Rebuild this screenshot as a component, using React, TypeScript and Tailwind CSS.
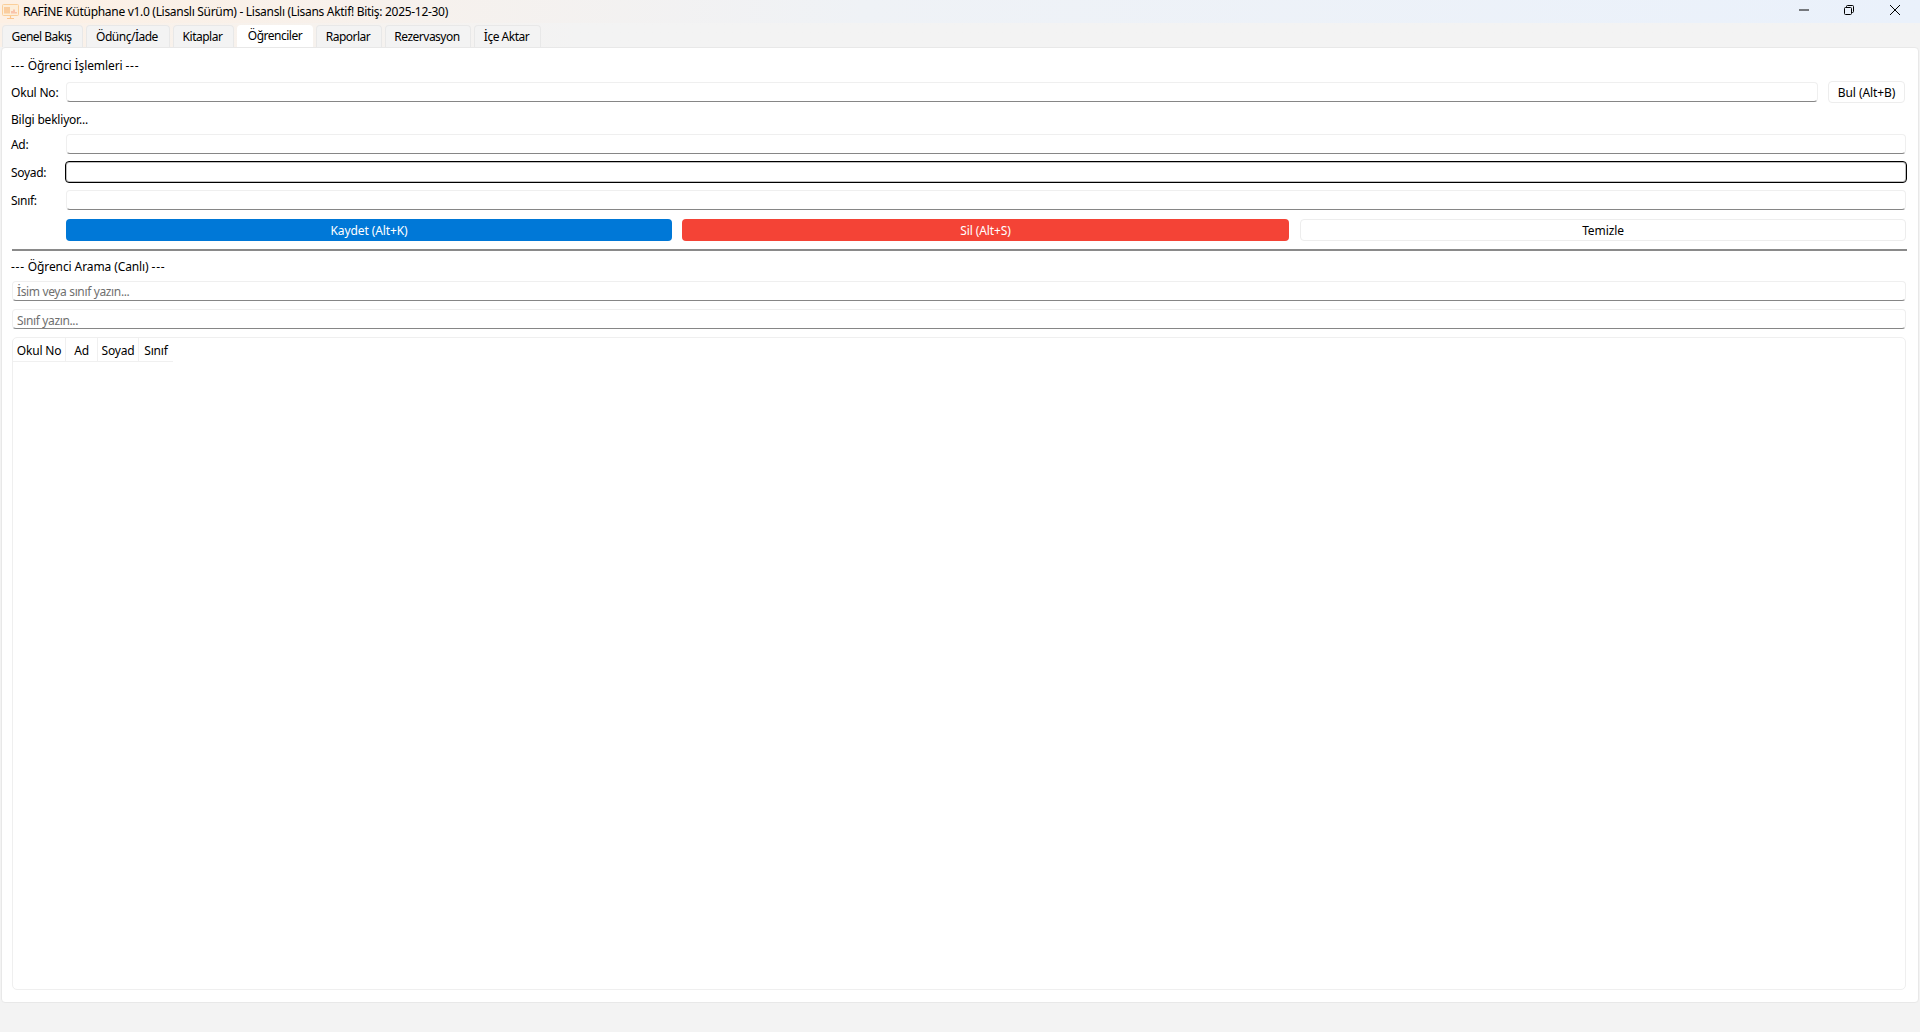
const font = "font-['Noto_Sans','Liberation_Sans',sans-serif]";

const tabs = [
  { label: 'Genel Bakış', width: 'w-[81px]' },
  { label: 'Ödünç/İade', width: 'w-[84px]' },
  { label: 'Kitaplar', width: 'w-[61px]' },
  { label: 'Öğrenciler', width: 'w-[76px]', active: true },
  { label: 'Raporlar', width: 'w-[66px]' },
  { label: 'Rezervasyon', width: 'w-[86px]' },
  { label: 'İçe Aktar', width: 'w-[67px]' },
];

const columns = [
  { label: 'Okul No', width: 'w-[53px]', border: 'border-r' },
  { label: 'Ad', width: 'w-[32px]', border: 'border-r' },
  { label: 'Soyad', width: 'w-[41px]', border: 'border-r' },
  { label: 'Sınıf', width: 'w-[34px]', border: '' },
];

const inputClass =
  'block h-5 rounded-[4px] border border-[#efefef] border-b-[#868686] bg-white px-1 text-xs tracking-[-0.36px] outline-none placeholder:text-[#6f6f6f]';

function AppIcon() {
  return (
    <svg width="17" height="17" viewBox="0 0 17 17" fill="none" className="ml-[2px] shrink-0">
      <rect x="0.500" y="1.500" width="16" height="11" rx="1" fill="#fdeeda" stroke="#fbcf9a" />
      <path d="M3 4v6.500M5 4v6.500M7 4v6.500" stroke="#f9b877" strokeWidth="1.200" />
      <path d="M10 8v2.500M12 6.500v4M14 9v1.500" stroke="#f7a78c" strokeWidth="1.200" />
      <path d="M8.500 13v2M5 15.500h7" stroke="#fbc58d" strokeWidth="1.200" />
    </svg>
  );
}

function WindowControls() {
  return (
    <div className="ml-auto mb-[3px] flex items-center text-black">
      <svg width="12" height="12" viewBox="0 0 12 12" className="mr-[33px]">
        <path d="M1 6h10" stroke="currentColor" strokeWidth="1" />
      </svg>
      <svg width="12" height="12" viewBox="0 0 12 12" fill="none" className="mr-[34px]">
        <rect x="1.500" y="3.500" width="7" height="7" rx="1" stroke="currentColor" />
        <path d="M3.500 3.500v-1a1 1 0 0 1 1-1h5a1 1 0 0 1 1 1v5a1 1 0 0 1-1 1h-1" stroke="currentColor" />
      </svg>
      <svg width="12" height="12" viewBox="0 0 12 12" className="mr-[19px]">
        <path d="M1 1l10 10M11 1L1 11" stroke="currentColor" strokeWidth="1" />
      </svg>
    </div>
  );
}

function SectionLabel({ text }: { text: string }) {
  return (
    <div className="flex h-[18px] items-center pl-[9px]">
      <span className="tracking-[0.7px]">---</span>
      <span>&nbsp;{text}&nbsp;</span>
      <span className="tracking-[0.7px]">---</span>
    </div>
  );
}

function FieldRow({ label, focused }: { label: string; focused?: boolean }) {
  return (
    <div className="flex items-center pl-[9px] pr-[12px]">
      <span className="w-[55px] shrink-0 pt-[2px] text-xs tracking-[-0.3px]">{label}</span>
      {focused ? (
        <input className="block h-[22px] flex-1 -ml-px -mr-px rounded-[4px] border border-black bg-white shadow-[inset_0_0_0_1px_rgba(0,0,0,0.25)] outline-none" />
      ) : (
        <input className={`${inputClass} flex-1`} />
      )}
    </div>
  );
}

export default function App() {
  return (
    <div className={`${font} flex h-[1032px] w-[1920px] flex-col overflow-hidden bg-[#f3f3f3] text-xs tracking-[-0.1px] text-black`}>
      {/* title bar */}
      <div className="flex h-[23px] shrink-0 items-center bg-gradient-to-r from-[#fdf0e4] via-[#eff2f6] via-[45%] to-[#eaf1fb]">
        <AppIcon />
        <span className="ml-[4px] tracking-[-0.3px]">RAFİNE Kütüphane v1.0 (Lisanslı Sürüm) - Lisanslı (Lisans Aktif! Bitiş: 2025-12-30)</span>
        <WindowControls />
      </div>

      {/* tabs */}
      <div className="flex h-6 shrink-0 items-end gap-[3px] bg-gradient-to-r from-[#fbf1e8] to-[#f3f3f3] to-[30%] pl-[2px] tracking-[-0.5px]">
        {tabs.map(tab => (
          <div
            key={tab.label}
            className={
              tab.active
                ? `${tab.width} flex h-[22px] items-start justify-center rounded-t-[4px] bg-white pt-[3px]`
                : `${tab.width} flex h-[22px] items-center justify-center rounded-t-[4px] border border-b-0 border-[#e8e8e8] bg-[#f3f3f3] pr-[2px]`
            }
          >
            {tab.label}
          </div>
        ))}
      </div>

      {/* panel */}
      <div className="mx-px flex h-[956px] flex-col rounded-[4px] border border-[#e8e8e8] bg-white pt-[9px]">
        <SectionLabel text="Öğrenci İşlemleri" />

        <div className="mt-[6px] flex items-center pl-[9px] pr-[13px]">
          <span className="w-[55px] shrink-0 pt-[2px] tracking-[-0.2px]">Okul No:</span>
          <input className={`${inputClass} flex-1`} />
          <button className="ml-[10px] h-[22px] w-[77px] rounded-[4px] border border-[#ededed] bg-white pt-[1px]">Bul (Alt+B)</button>
        </div>

        <div className="mt-2 flex h-[18px] items-center pl-[9px] tracking-[-0.2px]">Bilgi bekliyor...</div>

        <div className="mt-[5px]"><FieldRow label="Ad:" /></div>
        <div className="mt-[7px]"><FieldRow label="Soyad:" focused /></div>
        <div className="mt-[7px]"><FieldRow label="Sınıf:" /></div>

        <div className="mt-[9px] flex gap-[10px] pl-[64px] pr-[12px]">
          <button className="h-[22px] w-[606px] rounded-[4px] bg-[#0078d7] pt-[1px] text-white">Kaydet (Alt+K)</button>
          <button className="h-[22px] w-[607px] rounded-[4px] bg-[#f44336] pt-[1px] text-white">Sil (Alt+S)</button>
          <button className="ml-px h-[22px] flex-1 rounded-[4px] border border-[#ededed] bg-white pt-[1px]">Temizle</button>
        </div>

        <div className="mt-2 ml-[10px] mr-[11px] h-[2px] bg-[#8a8a8a]" />

        <div className="mt-[7px]"><SectionLabel text="Öğrenci Arama (Canlı)" /></div>

        <div className="mt-[5px] flex flex-col gap-2 pl-[10px] pr-[12px]">
          <input className={inputClass} placeholder="İsim veya sınıf yazın..." />
          <input className={`${inputClass} pt-[2px]`} placeholder="Sınıf yazın..." />
        </div>

        {/* student table */}
        <div className="mt-2 ml-[10px] mr-[12px] h-[653px] rounded-[5px] border border-[#efefef] bg-white tracking-[-0.2px]">
          <div className="flex h-6">
            {columns.map(col => (
              <div key={col.label} className={`${col.width} ${col.border} flex items-center justify-center border-b border-[#f0f0f0] pt-[2px]`}>
                {col.label}
              </div>
            ))}
          </div>
        </div>
      </div>
    </div>
  );
}
